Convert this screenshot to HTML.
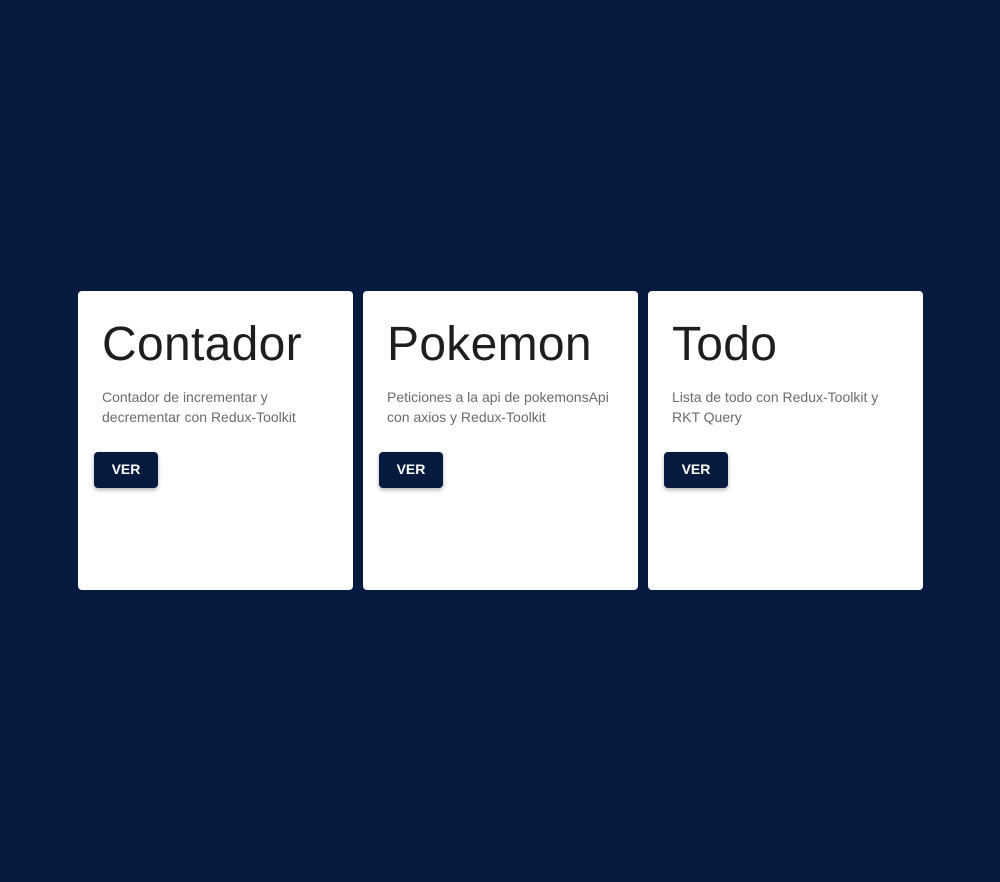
<!DOCTYPE html>
<html><head><meta charset="utf-8"><style>
html,body{margin:0;padding:0;background:#061a40;width:1000px;height:882px;overflow:hidden;font-family:"Liberation Sans",sans-serif}
.card{position:absolute;top:291px;width:275px;height:299px;background:#fff;border-radius:4px}
.t{position:absolute;left:24px;top:26px;font-size:48px;color:#1e1e1e;line-height:56px;letter-spacing:0.3px}
.d{position:absolute;left:24px;top:96px;width:235px;font-size:14px;line-height:20px;color:#6b6b6b}
.b{position:absolute;left:16px;top:161px;width:64px;height:36px;background:#061a40;color:#fff;border-radius:4px;font-weight:bold;font-size:14px;text-align:center;line-height:35px;box-shadow:0 2px 4px rgba(0,0,0,.3)}
</style></head><body>
<div class="card" style="left:78px"><div class="t">Contador</div><div class="d">Contador de incrementar y decrementar con Redux-Toolkit</div><div class="b">VER</div></div>
<div class="card" style="left:363px"><div class="t">Pokemon</div><div class="d">Peticiones a la api de pokemonsApi con axios y Redux-Toolkit</div><div class="b">VER</div></div>
<div class="card" style="left:648px"><div class="t">Todo</div><div class="d">Lista de todo con Redux-Toolkit y RKT Query</div><div class="b">VER</div></div>
</body></html>
